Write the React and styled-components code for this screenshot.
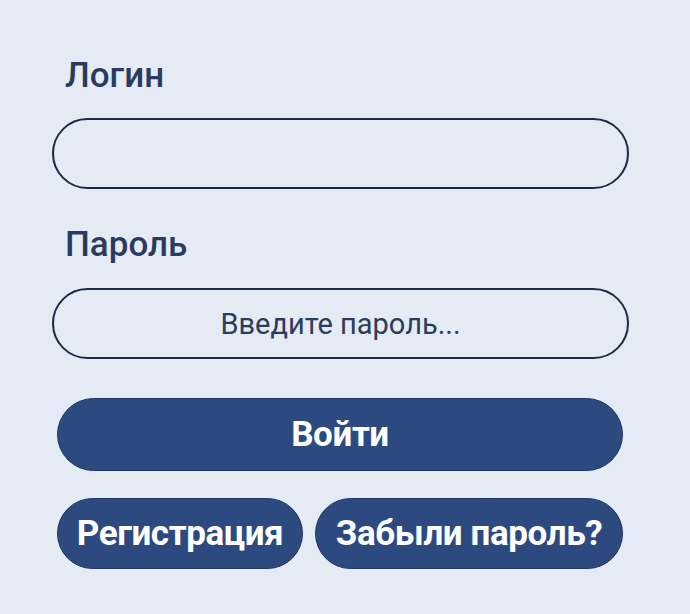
import React from "react";
import styled, { createGlobalStyle } from "styled-components";

const Global = createGlobalStyle`
  html, body { margin: 0; padding: 0; background: #e4ebf4; }
  body { font-family: Roboto, "Noto Sans", sans-serif; }
`;

const Page = styled.div`
  width: 690px;
  height: 614px;
  box-sizing: border-box;
  padding: 55px 61px 0 52px;
  display: flex;
  flex-direction: column;
`;

const Label = styled.label`
  display: block;
  margin: 0 0 ${p => p.$gap}px 13px;
  font-size: 35px;
  font-weight: 500;
  line-height: 42px;
  color: #2b3a5f;
`;

const Field = styled.input`
  box-sizing: border-box;
  width: 577px;
  height: 71px;
  border: 2px solid #1c2b45;
  border-radius: 36px;
  background: transparent;
  font-family: Roboto, sans-serif;
  font-size: 29px;
  color: #2d3b5c;
  text-align: center;
  outline: none;
  margin: 0 0 ${p => p.$after}px 0;
  &::placeholder { color: #2d3b5c; opacity: 1; }
`;

const Actions = styled.div`
  display: flex;
  flex-direction: column;
  gap: 27px;
  margin-left: 5px;
  width: 566px;
`;

const Row = styled.div`
  display: flex;
  gap: 12px;
`;

const Button = styled.button`
  box-sizing: border-box;
  height: ${p => p.$h}px;
  width: ${p => (p.$w ? `${p.$w}px` : "100%")};
  border: 1.5px solid #1f3764;
  border-radius: 40px;
  background: #2c4a7f;
  color: #ffffff;
  font-family: Roboto, sans-serif;
  font-weight: 700;
  font-size: 35px;
  letter-spacing: -0.4px;
  padding: 0;
  cursor: pointer;
`;

export default function App() {
  return (
    <>
      <Global />
      <Page>
        <Label $gap={21}>Логин</Label>
        <Field type="text" $after={35} />
        <Label $gap={22}>Пароль</Label>
        <Field type="password" placeholder="Введите пароль..." $after={39} />
        <Actions>
          <Button $h={73}>Войти</Button>
          <Row>
            <Button $h={71} $w={246}>Регистрация</Button>
            <Button $h={71} $w={308}>Забыли пароль?</Button>
          </Row>
        </Actions>
      </Page>
    </>
  );
}
